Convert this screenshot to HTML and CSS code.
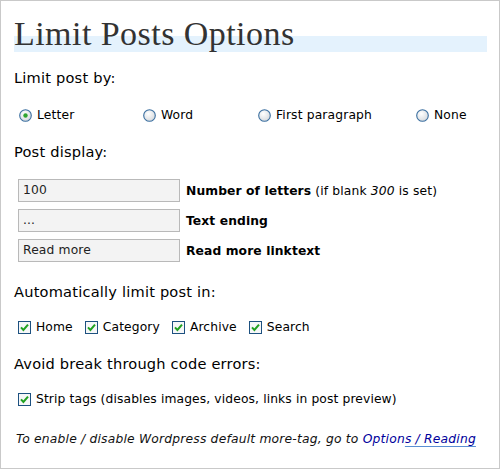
FILE: index.html
```html
<!DOCTYPE html>
<html>
<head>
<meta charset="utf-8">
<link rel="stylesheet" href="styles.css">
</head>
<body>
<div class="wrap">
  <h1 class="title">Limit Posts Options</h1>

  <p class="head head-first">Limit post by:</p>
  <div class="radios">
    <label class="opt"><svg class="radio" width="13" height="13" viewBox="0 0 13 13"><defs><radialGradient id="rg" cx="0.4" cy="0.35" r="0.7"><stop offset="0" stop-color="#ffffff"/><stop offset="1" stop-color="#d4d8dc"/></radialGradient></defs><circle cx="6.5" cy="6.5" r="5.8" fill="url(#rg)" stroke="#3b6fa0" stroke-width="1.1"/><circle cx="6.5" cy="6.5" r="2.2" fill="#2fa52f"/></svg>Letter</label>
    <label class="opt"><svg class="radio" width="13" height="13" viewBox="0 0 13 13"><circle cx="6.5" cy="6.5" r="5.8" fill="url(#rg)" stroke="#3b6fa0" stroke-width="1.1"/></svg>Word</label>
    <label class="opt"><svg class="radio" width="13" height="13" viewBox="0 0 13 13"><circle cx="6.5" cy="6.5" r="5.8" fill="url(#rg)" stroke="#3b6fa0" stroke-width="1.1"/></svg>First paragraph</label>
    <label class="opt"><svg class="radio" width="13" height="13" viewBox="0 0 13 13"><circle cx="6.5" cy="6.5" r="5.8" fill="url(#rg)" stroke="#3b6fa0" stroke-width="1.1"/></svg>None</label>
  </div>

  <p class="head">Post display:</p>
  <div class="fields">
    <div class="field"><span class="input">100</span><span class="flabel"><b>Number of letters</b> (if blank <i>300</i> is set)</span></div>
    <div class="field"><span class="input">...</span><span class="flabel"><b>Text ending</b></span></div>
    <div class="field"><span class="input">Read more</span><span class="flabel"><b>Read more linktext</b></span></div>
  </div>

  <p class="head head-gap">Automatically limit post in:</p>
  <div class="checks">
    <label class="chk"><svg class="cbox" width="13" height="13" viewBox="0 0 13 13"><rect x="0.5" y="0.5" width="12" height="12" fill="#f6f7f8" stroke="#1d5180"/><path d="M3 6.4 L5.4 9 L10 3.6" fill="none" stroke="#21a121" stroke-width="2"/></svg>Home</label>
    <label class="chk"><svg class="cbox" width="13" height="13" viewBox="0 0 13 13"><rect x="0.5" y="0.5" width="12" height="12" fill="#f6f7f8" stroke="#1d5180"/><path d="M3 6.4 L5.4 9 L10 3.6" fill="none" stroke="#21a121" stroke-width="2"/></svg>Category</label>
    <label class="chk"><svg class="cbox" width="13" height="13" viewBox="0 0 13 13"><rect x="0.5" y="0.5" width="12" height="12" fill="#f6f7f8" stroke="#1d5180"/><path d="M3 6.4 L5.4 9 L10 3.6" fill="none" stroke="#21a121" stroke-width="2"/></svg>Archive</label>
    <label class="chk"><svg class="cbox" width="13" height="13" viewBox="0 0 13 13"><rect x="0.5" y="0.5" width="12" height="12" fill="#f6f7f8" stroke="#1d5180"/><path d="M3 6.4 L5.4 9 L10 3.6" fill="none" stroke="#21a121" stroke-width="2"/></svg>Search</label>
  </div>

  <p class="head">Avoid break through code errors:</p>
  <div class="checks">
    <label class="chk"><svg class="cbox" width="13" height="13" viewBox="0 0 13 13"><rect x="0.5" y="0.5" width="12" height="12" fill="#f6f7f8" stroke="#1d5180"/><path d="M3 6.4 L5.4 9 L10 3.6" fill="none" stroke="#21a121" stroke-width="2"/></svg>Strip tags (disables images, videos, links in post preview)</label>
  </div>

  <p class="note">To enable / disable Wordpress default more-tag, go to <a class="link" href="#">Option<span class="ul">s / Reading</span></a></p>
</div>
</body>
</html>
```

FILE: styles.css
```css
html, body {
  margin: 0;
  padding: 0;
  background: #fff;
}
.wrap {
  box-sizing: border-box;
  width: 500px;
  height: 469px;
  border: 1px solid #c9c9c9;
  padding: 0 12px 0 13px;
  font-family: "DejaVu Sans", Verdana, sans-serif;
  color: #000;
  overflow: hidden;
}
.title {
  margin: 13px 0 0;
  height: 40px;
  font-family: "Liberation Serif", Georgia, serif;
  font-weight: normal;
  font-size: 34px;
  line-height: 40px;
  letter-spacing: 0.45px;
  color: #333;
  background: linear-gradient(to bottom, transparent 22px, #e4f2fd 22px, #e4f2fd 38px, transparent 38px);
}
.head {
  margin: 17px 0 0;
  font-size: 14.6px;
  line-height: 20px;
  letter-spacing: 0.2px;
  color: #000;
}
.head-first { margin-top: 14px; }
.head-gap { margin-top: 20px; }
.radios {
  margin-top: 17px;
  display: grid;
  grid-template-columns: 124px 115px 158px 1fr;
  padding-left: 5px;
  font-size: 12.3px;
  line-height: 20px;
  letter-spacing: 0.15px;
}
.opt, .chk {
  display: flex;
  align-items: center;
}
.radio {
  flex: none;
  margin-right: 5px;
}
.fields {
  margin-top: 17px;
  display: flex;
  flex-direction: column;
  gap: 7px;
  padding-left: 4px;
}
.field {
  display: flex;
  align-items: center;
  font-size: 12.3px;
  letter-spacing: 0.15px;
}
.input {
  box-sizing: border-box;
  width: 162px;
  height: 23px;
  border: 1px solid #b9b9b9;
  background: #f3f3f3;
  padding: 0 4px;
  line-height: 21px;
  color: #222;
  font-size: 12.3px;
}
.flabel {
  margin-left: 6px;
  color: #000;
}
.flabel b {
  font-weight: bold;
  letter-spacing: 0.1px;
}
.checks {
  margin-top: 15px;
  display: flex;
  gap: 12px;
  padding-left: 4px;
  font-size: 12.3px;
  line-height: 20px;
  letter-spacing: 0.12px;
}
.cbox {
  flex: none;
  margin-right: 5px;
}
.note {
  margin: 20px 0 0;
  padding-left: 2px;
  font-size: 12.3px;
  line-height: 20px;
  letter-spacing: 0.2px;
  font-style: italic;
  color: #111;
}
.link {
  color: #00009c;
  text-decoration: none;
}
.ul {
  text-decoration: underline;
  text-decoration-color: #5b8fd3;
  text-underline-offset: 3px;
}
```
